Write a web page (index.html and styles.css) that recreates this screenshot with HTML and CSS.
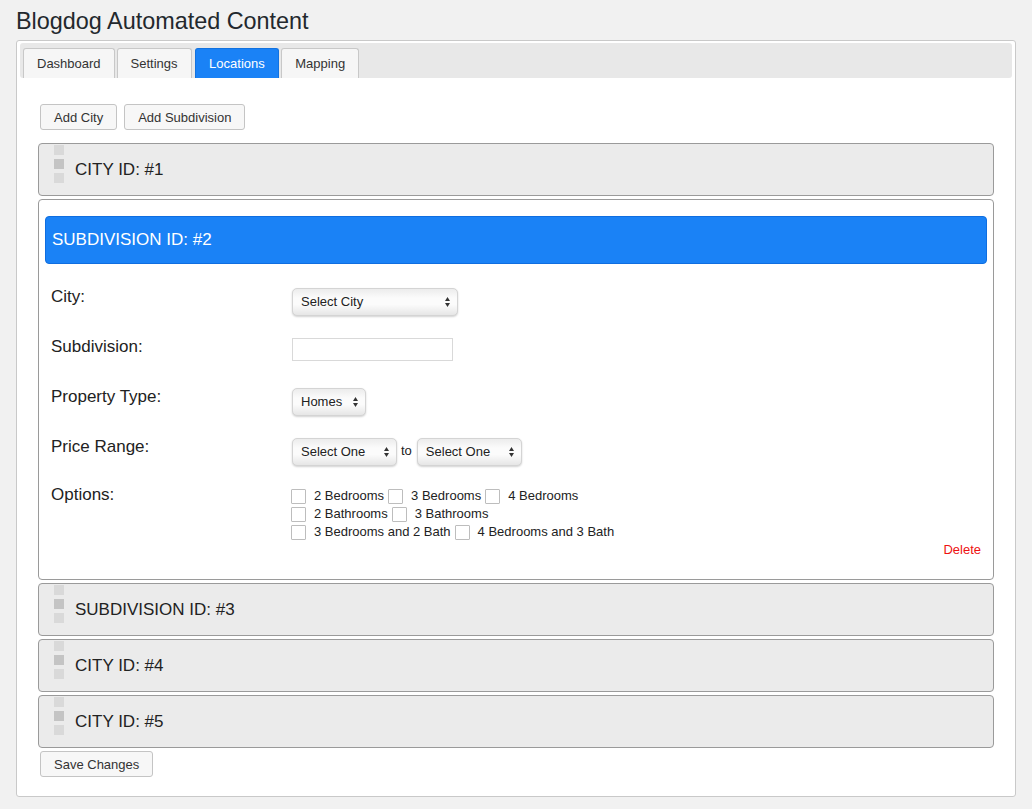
FILE: index.html
```html
<!DOCTYPE html>
<html>
<head>
<meta charset="utf-8">
<title>Blogdog Automated Content</title>
<link rel="stylesheet" href="styles.css">
</head>
<body>
<div class="wrap">
  <h1 class="title">Blogdog Automated Content</h1>
  <div class="box">
    <div class="tabbar">
      <a class="tab">Dashboard</a>
      <a class="tab">Settings</a>
      <a class="tab active">Locations</a>
      <a class="tab">Mapping</a>
    </div>
    <div class="content">
      <div class="actions">
        <button class="btn">Add City</button>
        <button class="btn">Add Subdivision</button>
      </div>

      <div class="panel closed">
        <span class="handle"><i></i><i class="mid"></i><i></i></span>
        <span class="ptitle">CITY ID: #1</span>
      </div>

      <div class="panel open">
        <div class="phead">SUBDIVISION ID: #2</div>
        <div class="form">
          <div class="row">
            <div class="lbl">City:</div>
            <div class="ctl"><select class="sel sel-city"><option>Select City</option></select></div>
          </div>
          <div class="row">
            <div class="lbl">Subdivision:</div>
            <div class="ctl"><input class="txt" type="text"></div>
          </div>
          <div class="row">
            <div class="lbl">Property Type:</div>
            <div class="ctl"><select class="sel sel-type"><option>Homes</option></select></div>
          </div>
          <div class="row">
            <div class="lbl">Price Range:</div>
            <div class="ctl">
              <select class="sel sel-price"><option>Select One</option></select>
              <span class="to">to</span>
              <select class="sel sel-price"><option>Select One</option></select>
            </div>
          </div>
          <div class="row options">
            <div class="lbl">Options:</div>
            <div class="ctl opts">
              <div class="optline">
                <label class="opt"><input type="checkbox" class="cb">2 Bedrooms</label>
                <label class="opt"><input type="checkbox" class="cb">3 Bedrooms</label>
                <label class="opt"><input type="checkbox" class="cb">4 Bedrooms</label>
              </div>
              <div class="optline">
                <label class="opt"><input type="checkbox" class="cb">2 Bathrooms</label>
                <label class="opt"><input type="checkbox" class="cb">3 Bathrooms</label>
              </div>
              <div class="optline">
                <label class="opt"><input type="checkbox" class="cb">3 Bedrooms and 2 Bath</label>
                <label class="opt"><input type="checkbox" class="cb">4 Bedrooms and 3 Bath</label>
              </div>
            </div>
          </div>
          <div class="delrow"><a class="del">Delete</a></div>
        </div>
      </div>

      <div class="panel closed">
        <span class="handle"><i></i><i class="mid"></i><i></i></span>
        <span class="ptitle">SUBDIVISION ID: #3</span>
      </div>
      <div class="panel closed">
        <span class="handle"><i></i><i class="mid"></i><i></i></span>
        <span class="ptitle">CITY ID: #4</span>
      </div>
      <div class="panel closed">
        <span class="handle"><i></i><i class="mid"></i><i></i></span>
        <span class="ptitle">CITY ID: #5</span>
      </div>

      <div class="actions save">
        <button class="btn">Save Changes</button>
      </div>
    </div>
  </div>
</div>
</body>
</html>
```

FILE: styles.css
```css
* { box-sizing: border-box; }

body {
  margin: 0;
  background: #f1f1f1;
  font-family: "Liberation Sans", Arial, sans-serif;
  color: #222;
}

.wrap {
  padding: 0 16px;
}

.title {
  margin: 7px 0 5px;
  font-size: 23.4px;
  line-height: 28px;
  font-weight: normal;
  color: #23282d;
}

.box {
  width: 1000px;
  background: #fff;
  border: 1px solid #c9c9c9;
  border-radius: 3px;
  padding: 2px 3px 19px;
}

.tabbar {
  height: 35px;
  background: #e8e8e8;
  border-radius: 3px;
  padding: 5px 3px 0;
  display: flex;
  gap: 2px;
}

.tab {
  height: 30px;
  padding: 0 13px;
  display: flex;
  align-items: center;
  font-size: 13px;
  color: #333;
  background: #f6f6f6;
  border: 1px solid #c8c8c8;
  border-bottom: none;
  border-radius: 3px 3px 0 0;
}

.tab.active {
  margin-left: 1px;
  padding: 0 13.5px;
  background: #1a82f6;
  border-color: #1272e0;
  color: #fff;
}

.content {
  padding: 26px 18px 0;
}

.actions {
  display: flex;
  gap: 7px;
  padding-left: 2px;
  margin-bottom: 13px;
}
.actions.save {
  margin: 2px 0 0;
}

.btn {
  height: 26px;
  padding: 0 13px;
  font-family: "Liberation Sans", Arial, sans-serif;
  font-size: 13px;
  color: #333;
  background: #f7f7f7;
  border: 1px solid #c4c4c4;
  border-radius: 3px;
}

.panel {
  border: 1px solid #9a9a9a;
  border-radius: 4px;
  margin-bottom: 3px;
}

.panel.closed {
  height: 53px;
  background: #ebebeb;
  display: flex;
  align-items: center;
  padding: 0 0 0 15px;
}

.handle {
  align-self: flex-start;
  margin-top: 1px;
  display: flex;
  flex-direction: column;
  gap: 4px;
  width: 10px;
}
.handle i {
  display: block;
  width: 10px;
  height: 10px;
  background: #d9d9d9;
}
.handle i.mid { background: #c4c4c4; }

.ptitle {
  margin-left: 11px;
  font-size: 17px;
  color: #222;
}

.panel.open {
  background: #fff;
  padding: 16px 6px 21px;
}

.phead {
  height: 48px;
  background: #1a82f6;
  border: 1px solid #0f6ee0;
  border-radius: 4px;
  color: #fff;
  font-size: 17px;
  display: flex;
  align-items: center;
  padding-left: 6px;
}

.form {
  padding: 24px 6px 0 6px;
}

.row {
  display: flex;
  height: 50px;
}

.lbl {
  width: 241px;
  flex: none;
  font-size: 17px;
  line-height: 18px;
  color: #222;
}

.ctl {
  display: flex;
  align-items: flex-start;
}

.sel {
  appearance: none;
  -webkit-appearance: none;
  height: 28px;
  margin: 0;
  padding: 0 0 1px 8px;
  font-family: "Liberation Sans", Arial, sans-serif;
  font-size: 13px;
  color: #222;
  border: 1px solid #d4d4d4;
  border-radius: 5px;
  box-shadow: 0 1px 2px rgba(0, 0, 0, 0.18);
  background-color: #f4f4f4;
  background-image:
    url("data:image/svg+xml,%3Csvg xmlns='http://www.w3.org/2000/svg' width='5' height='10' viewBox='0 0 5 10'%3E%3Cpath d='M0 4 L2.5 0 L5 4 Z M0 6 L2.5 10 L5 6 Z' fill='%23333'/%3E%3C/svg%3E"),
    linear-gradient(#ececec, #fbfbfb 35%, #fbfbfb 60%, #e6e6e6);
  background-repeat: no-repeat, no-repeat;
  background-position: right 7px center, 0 0;
  background-size: 5px 10px, 100% 100%;
}

.sel-city { width: 166px; }
.sel-type { width: 74px; }
.sel-price { width: 105px; }

.to {
  font-size: 13px;
  line-height: 26px;
  margin: 0 5px 0 4px;
  color: #222;
}

.txt {
  width: 161px;
  height: 23px;
  margin: 0;
  border: 1px solid #d9d9d9;
  background: #fff;
  padding: 0 4px;
  font-size: 13px;
}

.row.options {
  height: auto;
  margin-top: -2px;
}
.row.options .lbl {
  line-height: 18px;
}

.opts {
  flex-direction: column;
  margin-left: -1px;
}

.optline {
  display: flex;
  height: 18px;
  align-items: center;
}

.opt {
  display: flex;
  align-items: center;
  font-size: 13px;
  color: #222;
  margin-right: 4px;
  white-space: nowrap;
}

.cb {
  appearance: none;
  -webkit-appearance: none;
  width: 15px;
  height: 15px;
  margin: 3px 8px 0 0;
  border: 1px solid #bdbdbd;
  background: #fff;
  border-radius: 1px;
}

.delrow {
  display: flex;
  justify-content: flex-end;
  height: 18px;
  align-items: center;
}

.del {
  font-size: 13px;
  color: #ee1111;
}
```
